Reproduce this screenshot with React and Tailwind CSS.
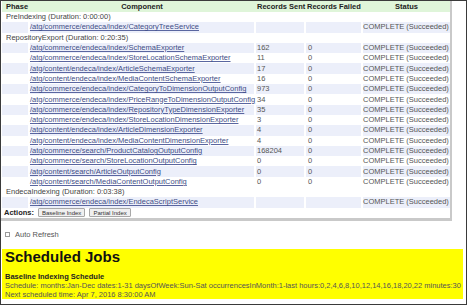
import React from "react";

const groups = [
  {
    phase: "PreIndexing (Duration: 0:00:00)",
    items: [["/atg/commerce/endeca/index/CategoryTreeService", "", ""]],
  },
  {
    phase: "RepositoryExport (Duration: 0:20:35)",
    items: [
      ["/atg/commerce/endeca/index/SchemaExporter", "162", "0"],
      ["/atg/commerce/endeca/index/StoreLocationSchemaExporter", "11", "0"],
      ["/atg/content/endeca/index/ArticleSchemaExporter", "17", "0"],
      ["/atg/content/endeca/index/MediaContentSchemaExporter", "16", "0"],
      ["/atg/commerce/endeca/index/CategoryToDimensionOutputConfig", "973", "0"],
      ["/atg/commerce/endeca/index/PriceRangeToDimensionOutputConfig", "34", "0"],
      ["/atg/commerce/endeca/index/RepositoryTypeDimensionExporter", "35", "0"],
      ["/atg/commerce/endeca/index/StoreLocationDimensionExporter", "3", "0"],
      ["/atg/content/endeca/index/ArticleDimensionExporter", "4", "0"],
      ["/atg/content/endeca/index/MediaContentDimensionExporter", "4", "0"],
      ["/atg/commerce/search/ProductCatalogOutputConfig", "168204", "0"],
      ["/atg/commerce/search/StoreLocationOutputConfig", "0", "0"],
      ["/atg/content/search/ArticleOutputConfig", "0", "0"],
      ["/atg/content/search/MediaContentOutputConfig", "0", "0"],
    ],
  },
  {
    phase: "EndecaIndexing (Duration: 0:03:38)",
    items: [["/atg/commerce/endeca/index/EndecaScriptService", "", ""]],
  },
];

const cols = "grid grid-cols-[26px_224px_48px_55px_87px] gap-x-[2px]";

function LinkRow({ item, shaded }) {
  const bg = shaded ? "bg-[#eceffa]" : "bg-white";
  return (
    <div className={`${cols} h-[10.3px] items-stretch`}>
      <div className={bg}></div>
      <div className={`${bg} flex items-center whitespace-nowrap overflow-visible`}>
        <span className="text-[#3e4c86] underline underline-offset-[1px] decoration-[#5a66a0]">{item[0]}</span>
      </div>
      <div className={`${bg} flex items-center pl-[1px] text-[#555]`}>{item[1]}</div>
      <div className={`${bg} flex items-center pl-[2px] text-[#555]`}>{item[2]}</div>
      <div className={`${bg} flex items-center whitespace-nowrap text-[#555]`}>COMPLETE (Succeeded)</div>
    </div>
  );
}

export default function App() {
  return (
    <div className="w-[467px] h-[305px] overflow-hidden border border-[#3a3a3a] bg-white font-['Liberation_Sans',Arial,sans-serif] text-[7.5px] leading-[10px] text-[#444]">
      <div className="w-[451px] pl-[1px] border-r-[2px] border-b-[3px] border-[#c9c9c9]">
        <div className={`${cols} h-[11px] items-center bg-[#dff5d9] font-bold text-[#222]`}>
          <div className="pl-[4px]">Phase</div>
          <div className="text-center">Component</div>
          <div className="pl-[1px] whitespace-nowrap">Records Sent</div>
          <div className="pl-[1px] whitespace-nowrap">Records Failed</div>
          <div className="text-center">Status</div>
        </div>
        {groups.map((g) => (
          <React.Fragment key={g.phase}>
            <div className="h-[10.3px] flex items-center pl-[4px] text-[#444]">{g.phase}</div>
            {g.items.map((it, i) => (
              <LinkRow key={it[0]} item={it} shaded={i % 2 === 0} />
            ))}
          </React.Fragment>
        ))}
        <div className="h-[10.3px] flex items-center gap-[4px] pl-[2px]">
          <span className="font-bold text-[#222]">Actions:</span>
          <span className="h-[9px] px-[3px] flex items-center border border-[#a8a8a8] bg-[#f0f0f0] text-[6px] text-[#333] rounded-[1px]">Baseline Index</span>
          <span className="h-[9px] px-[3px] flex items-center border border-[#a8a8a8] bg-[#f0f0f0] text-[6px] text-[#333] rounded-[1px]">Partial Index</span>
        </div>
      </div>
      <div className="h-[28px] flex items-center gap-[5px] pl-[4px] text-[#555]">
        <span className="w-[5px] h-[5px] border border-[#9a9a9a] bg-white"></span>
        <span>Auto Refresh</span>
      </div>
      <div className="ml-[1px] w-[461px] h-[50px] bg-[#ffff00] pl-[3px]">
        <div className="text-[15px] leading-[15px] font-bold text-[#111]">Scheduled Jobs</div>
        <div className="mt-[8.5px] leading-[9px]">
          <div className="font-bold text-[#222]">Baseline Indexing Schedule</div>
          <div className="text-[#555] whitespace-nowrap">Schedule: months:Jan-Dec dates:1-31 daysOfWeek:Sun-Sat occurrencesInMonth:1-last hours:0,2,4,6,8,10,12,14,16,18,20,22 minutes:30</div>
          <div className="text-[#555]">Next scheduled time: Apr 7, 2016 8:30:00 AM</div>
        </div>
      </div>
    </div>
  );
}
